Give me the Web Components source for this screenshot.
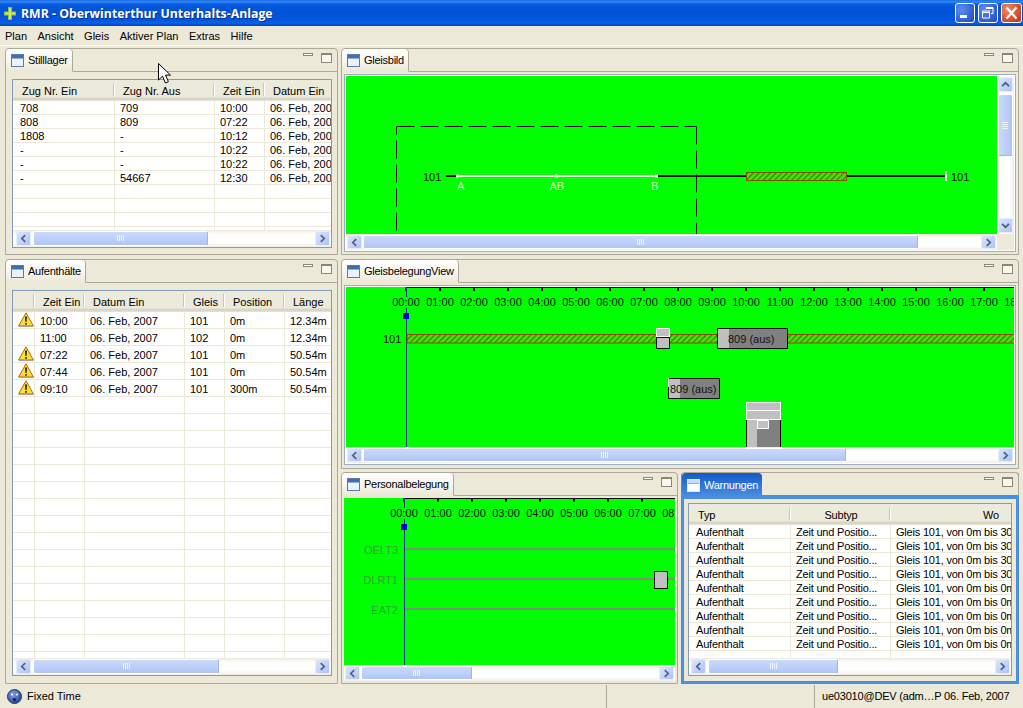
<!DOCTYPE html>
<html lang="de">
<head>
<meta charset="utf-8">
<title>RMR</title>
<style>
  html, body { margin: 0; padding: 0; height: 708px; overflow: hidden; background: #ece9d8; }
  body { font: 11px "Liberation Sans", sans-serif; color: #000; }
  .app { display: flex; flex-direction: column; height: 708px; position: relative; }
  .desk {
    display: grid;
    grid-template-columns: 333px 678px;
    grid-template-rows: 207px 214px 215px;
    column-gap: 3px;
    padding: 2px 0 0 5px;
  }
  .r2 { margin-top: 4px; }
  .r3 { margin-top: 3px; }
  .bottom { display: grid; grid-template-columns: 337px 338px; column-gap: 3px; }
  .cursor { position: absolute; left: 158px; top: 63px; }
</style>
</head>
<body>
<template id="win-icon">
  <svg width="13" height="13" viewBox="0 0 13 13"><rect x=".5" y=".5" width="12" height="12" fill="#eaf3fc" stroke="#5a7ca6"/><rect x="1" y="1" width="11" height="3" fill="#3f6fae"/><rect x="1" y="4" width="11" height="1" fill="#8fb1d8"/></svg>
</template>

<div class="app">
  <title-bar heading="RMR - Oberwinterthur Unterhalts-Anlage"></title-bar>
  <menu-bar items="Plan,Ansicht,Gleis,Aktiver Plan,Extras,Hilfe"></menu-bar>
  <div class="desk">
    <view-pane label="Stilllager" style="--pad:7px 5px 6px 6px">
      <data-table id="still" rows-h="14" thumb="2" thumb-len="175" style="--bar-l:3px"></data-table>
    </view-pane>
    <view-pane label="Gleisbild" style="--pad:2px">
      <framed-canvas thumb="1" thumb-len="555" vertical><track-plan></track-plan></framed-canvas>
    </view-pane>
    <view-pane label="Aufenthälte" style="--pad:7px 5px 7px 6px;grid-row:2/4;margin-top:4px">
      <data-table id="stay" rows-h="17" thumb="2" thumb-len="186" style="--bar-l:3px"></data-table>
    </view-pane>
    <view-pane class="r2" label="GleisbelegungView" style="--pad:2px 2px 3px 2px">
      <framed-canvas thumb="1" thumb-len="483"><occupancy-chart></occupancy-chart></framed-canvas>
    </view-pane>
    <div class="bottom r3">
      <view-pane label="Personalbelegung" style="--pad:2px">
        <framed-canvas bare thumb="1" thumb-len="111" bar-h="16"><staff-chart></staff-chart></framed-canvas>
      </view-pane>
      <view-pane label="Warnungen" active style="--pad:4px 4px 5px 4px">
        <data-table id="warn" rows-h="14" thumb="2" thumb-len="130" style="--bar-l:2px;letter-spacing:-.2px"></data-table>
      </view-pane>
    </div>
  </div>
  <status-bar></status-bar>
  <svg class="cursor" width="13" height="21" viewBox="0 0 13 21"><path d="M.5.5V17l4-3.8L7.4 20l3-1.3-2.9-6.6h5Z" fill="#fff" stroke="#000"/></svg>
</div>

<script>
class TitleBar extends HTMLElement {
  connectedCallback() {
    this.attachShadow({ mode: 'open' });
    this.shadowRoot.innerHTML = `
      <style>
        :host { display: flex; align-items: center; height: 26px; box-sizing: border-box; padding: 0 1px 0 4px;
          background: linear-gradient(#1f6fe8 0, #2f86f5 2px, #0a5be0 4px, #0052d6 10px, #0056dc 20px, #0a60e8 23px, #0044b8 26px); }
        .name { flex: 1; margin-left: 5px; color: #fff; font: bold 12.3px "Open Sans", sans-serif; text-shadow: 1px 1px 0 #0a2f90; white-space: nowrap; }
        .btns { display: flex; gap: 3px; }
        .b { width: 20px; height: 20px; box-sizing: border-box; border: 1px solid #fff; border-radius: 3px; display: block;
          background: radial-gradient(circle at 30% 30%, #5c8cf0, #2a55c8 80%); }
        .b.x { background: radial-gradient(circle at 30% 30%, #ee8a68, #c8401e 80%); width: 21px; }
      </style>
      <svg width="12" height="13" viewBox="0 0 12 13"><path d="M4 0h4v4.5h4v4H8V13H4V8.5H0v-4h4Z" fill="#8fc23a"/><path d="M5 1h2v4.5h4v2H7V12H5V7.5H1v-2h4Z" fill="#cfe860"/></svg>
      <div class="name">${this.getAttribute('heading')}</div>
      <div class="btns">
        <svg class="b" viewBox="0 0 18 18"><rect x="4" y="11" width="7" height="3" fill="#fff"/></svg>
        <svg class="b" viewBox="0 0 18 18"><path d="M7 3.5h7v6h-2M3.5 7h7v7h-7Z M3.5 8.5h7M7 4.5h7" fill="none" stroke="#fff"/></svg>
        <svg class="b x" viewBox="0 0 19 18"><path d="M4.5 3.5l10 11M14.5 3.5l-10 11" stroke="#fff" stroke-width="2.2"/></svg>
      </div>`;
  }
}

class MenuBar extends HTMLElement {
  connectedCallback() {
    this.attachShadow({ mode: 'open' });
    const items = this.getAttribute('items').split(',').map(i => `<span>${i}</span>`).join('');
    this.shadowRoot.innerHTML = `
      <style>
        :host { display: flex; gap: 10.5px; height: 20px; box-sizing: border-box; align-items: center; padding: 0 0 0 5px;
          border-bottom: 1px solid #fff; font-size: 11px; }
      </style>${items}`;
  }
}

class ViewPane extends HTMLElement {
  connectedCallback() {
    this.attachShadow({ mode: 'open' });
    this.shadowRoot.innerHTML = `
      <style>
        :host { display: flex; flex-direction: column; box-sizing: border-box; min-height: 0; min-width: 0;
          border: 1px solid #aca899; border-radius: 4px 4px 0 0; background: #ece9d8; }
        :host([active]) { border-color: #aca899 #4a8fdf #4a8fdf #4a8fdf; }
        .head { flex: none; height: 23px; box-sizing: border-box; display: flex; border-bottom: 1px solid #aca899; }
        :host([active]) .head { border-bottom-color: #4a8fdf; border-right: 1px solid #aca899; margin-right: -1px; }
        .tab { height: 23px; box-sizing: border-box; display: flex; align-items: center; gap: 4px; padding: 0 4px 0 5px; letter-spacing: -.25px;
          background: linear-gradient(#fff, #f6f4ec 60%, #ece9d8); border-right: 1px solid #aca899; border-bottom: 1px solid #ece9d8;
          border-radius: 4px 4px 0 0; }
        :host([active]) .tab { background: linear-gradient(#1259c8, #2a70d4 40%, #4a8fdf); color: #fff; border: 0; height: 24px; }
        .tools { margin-left: auto; display: flex; gap: 8px; padding: 4px 5px 0 0; }
        .min { width: 10px; height: 3px; border: 1px solid #8a8778; box-sizing: border-box; background: #fff; }
        .max { width: 11px; height: 10px; border: 1px solid #8a8778; border-top-width: 2px; box-sizing: border-box; background: #f8f7f0; }
        .body { flex: 1; min-height: 0; display: flex; padding: var(--pad, 2px); }
        :host([active]) .body { border: 2px solid #4a8fdf; border-top-width: 3px; }
        ::slotted(*) { flex: 1; min-width: 0; }
        svg { display: block; }
      </style>
      <div class="head">
        <div class="tab"><span class="ic"></span><span>${this.getAttribute('label')}</span></div>
        <div class="tools"><div class="min"></div><div class="max"></div></div>
      </div>
      <div class="body"><slot></slot></div>`;
    const ic = document.getElementById('win-icon').content.cloneNode(true);
    if (this.hasAttribute('active')) {
      ic.querySelectorAll('rect')[0].setAttribute('stroke', '#dfe9fb');
      ic.querySelectorAll('rect')[0].setAttribute('fill', '#fff');
      ic.querySelectorAll('rect')[1].setAttribute('fill', '#c9dbf6');
    }
    this.shadowRoot.querySelector('.ic').append(ic);
  }
}

class ScrollBar extends HTMLElement {
  connectedCallback() {
    this.attachShadow({ mode: 'open' });
    const vert = this.hasAttribute('vertical');
    const pos = this.getAttribute('thumb') || 1, len = this.getAttribute('thumb-len') || 50;
    const prev = vert ? 'M3.5 9.5L7.5 5.5l4 4' : 'M9.5 3.5L5.5 7.5l4 4';
    const next = vert ? 'M3.5 5.5l4 4 4-4' : 'M5.5 3.5l4 4-4 4';
    const grip = vert
      ? '<path d="M0 .5h6M0 2.5h6M0 4.5h6M0 6.5h6" stroke="#eef3fe"/>'
      : '<path d="M.5 0v6M2.5 0v6M4.5 0v6M6.5 0v6" stroke="#eef3fe"/>';
    this.shadowRoot.innerHTML = `
      <style>
        :host { display: flex; flex: none; box-sizing: border-box; padding: 1px var(--bar-r,1px) 1px var(--bar-l,1px);
          flex-direction: ${vert ? 'column' : 'row'}; ${vert ? 'width:17px' : 'height:var(--bar-h,17px)'};
          background: linear-gradient(${vert ? 'to right, #ece9e0, #fdfdfb 4px, #fff 12px, #f1efe6' : '#ece9e0, #fdfdfb 4px, #fff 12px, #f1efe6'}); }
        .btn { flex: none; ${vert ? 'height:15px' : 'width:15px'}; box-sizing: border-box; border: 1px solid #e6edfc; border-radius: 2px;
          background: linear-gradient(135deg, #dbe5fd, #aec3f4); display: flex; align-items: center; justify-content: center; }
        .next { margin-${vert ? 'top' : 'left'}: auto; }
        .thumb { flex: none; box-sizing: border-box; ${vert ? 'height' : 'width'}: ${len}px; margin-${vert ? 'top' : 'left'}: ${pos}px;
          border: 1px solid #fff; border-${vert ? 'bottom' : 'right'}-color: #9eb6e8; border-radius: 2px;
          background: linear-gradient(${vert ? 'to right, ' : ''}#cbd9fa, #bbcef8 60%, #b0c5f5); display: flex; align-items: center; justify-content: center; }
        svg { display: block; }
      </style>
      <div class="btn"><svg width="15" height="15" viewBox="0 0 15 15"><path d="${prev}" fill="none" stroke="#4d6185" stroke-width="2"/></svg></div>
      <div class="thumb"><svg width="7" height="7" viewBox="0 0 7 7">${grip}</svg></div>
      <div class="btn next"><svg width="15" height="15" viewBox="0 0 15 15"><path d="${next}" fill="none" stroke="#4d6185" stroke-width="2"/></svg></div>`;
  }
}

const WARN_ICON = `<svg width="16" height="15" viewBox="0 0 16 15" style="display:block"><path d="M8 .8L15.4 14H.6Z" fill="#ffdd33" stroke="#b06a10" stroke-linejoin="round"/><path d="M7 4.5h2L8.6 10H7.4Z M7.2 11h1.6v1.7H7.2Z" fill="#222"/><path d="M15.4 14.5H.8" stroke="#a8a090"/></svg>`;

class DataTable extends HTMLElement {
  // columns and rows are set from the page script, render() is called after
  render(columns, rows) {
    this.attachShadow({ mode: 'open' });
    const h = +this.getAttribute('rows-h');
    const total = columns.reduce((s, c) => s + c.w, 0);
    const head = columns.map((c, i) => `<div class="hc ${c.center ? 'center' : ''}" style="width:${c.w}px;padding-left:${i ? 8 : 9}px">${c.title}</div>`).join('');
    let body = '';
    const n = Math.ceil(346 / h);
    for (let r = 0; r < n; r++) {
      const row = rows[r] || [];
      body += `<div class="row">` + columns.map((c, i) => {
        const v = row[i] === undefined ? '' : row[i];
        const inner = v === '!' ? WARN_ICON : v;
        return `<div class="c${v === '!' ? ' ico' : ''}" style="width:${c.w}px;padding-left:${i ? 5 : 7}px">${inner}</div>`;
      }).join('') + `</div>`;
    }
    this.shadowRoot.innerHTML = `
      <style>
        :host { display: flex; flex-direction: column; box-sizing: border-box; border: 1px solid #7f9db9; background: #fff; overflow: hidden; }
        .head { flex: none; height: 21px; display: flex; overflow: hidden; box-sizing: border-box; padding-bottom: 3px;
          background: linear-gradient(#ebeadb, #ebeadb 17px, #dcd9c9 18px, #d2cfbe 19px, #e2e0d3 20px); }
        .hc { flex: none; box-sizing: border-box; line-height: 22px; white-space: nowrap; position: relative; overflow: hidden; }
        .hc::after { content: ""; position: absolute; right: 1px; top: 3px; bottom: 2px; width: 1px; background: #c9c6b5; box-shadow: 1px 0 #fff; }
        .hc.center { text-align: center; padding-left: 0 !important; }
        .body { flex: 1; min-height: 0; overflow: hidden; }
        .row { display: flex; height: ${h}px; box-sizing: border-box; border-bottom: 1px solid #ece9d8; width: ${total}px; }
        .c { flex: none; box-sizing: border-box; border-right: 1px solid #ece9d8; line-height: ${h > 14 ? h + 1 : h}px; white-space: nowrap; overflow: hidden; height: ${h - 1}px; }
        .c.ico { padding-left: 5px !important; overflow: visible; }
      </style>
      <div class="head">${head}</div>
      <div class="body">${body}</div>
      <scroll-bar thumb="${this.getAttribute('thumb')}" thumb-len="${this.getAttribute('thumb-len')}"></scroll-bar>`;
  }
}

class FramedCanvas extends HTMLElement {
  connectedCallback() {
    this.attachShadow({ mode: 'open' });
    const t = this.getAttribute('thumb'), l = this.getAttribute('thumb-len');
    const vert = this.hasAttribute('vertical');
    const bare = this.hasAttribute('bare');
    this.shadowRoot.innerHTML = `
      <style>
        :host { display: grid; box-sizing: border-box; min-height: 0; grid-template-columns: 1fr ${vert ? '17px' : ''}; grid-template-rows: 1fr auto;
          ${bare ? '' : 'border: 1px solid #9fb0c4; padding: 1px; background: #fff;'} }
        .view { background: #00ff00; min-height: 0; min-width: 0; overflow: hidden; }
        .corner { background: #ece9d8; }
        scroll-bar { --bar-h: ${this.getAttribute('bar-h') || 16}px; }
      </style>
      <div class="view"><slot></slot></div>
      ${vert ? '<scroll-bar vertical thumb="2" thumb-len="62"></scroll-bar>' : ''}
      <scroll-bar thumb="${t}" thumb-len="${l}"></scroll-bar>
      ${vert ? '<div class="corner"></div>' : ''}`;
  }
}

// hatch pattern shared by the track drawings
const HATCH = id => `<pattern id="${id}" width="4" height="4" patternUnits="userSpaceOnUse" patternTransform="rotate(45)"><rect width="4" height="4" fill="#3fe800"/><rect width="1.2" height="4" fill="#3c7a10"/></pattern>`;
const SVG_FONT = `font-family="Liberation Sans, sans-serif" font-size="11"`;

class TrackPlan extends HTMLElement {
  connectedCallback() {
    this.attachShadow({ mode: 'open' });
    // coordinates are window pixels minus the origin of the green area
    const ox = 346, oy = 76;
    const X = x => x - ox, Y = y => y - oy;
    this.shadowRoot.innerHTML = `
      <style>:host { display: block; } svg { display: block; }</style>
      <svg width="651" height="159" ${SVG_FONT}>
        <defs>${HATCH('h1')}</defs>
        <path d="M${X(396.5)} ${Y(126.5)}H${X(696.5)}" fill="none" stroke="#111" stroke-dasharray="18 6"/>
        <path d="M${X(396.5)} ${Y(126.5)}V${Y(234)}" fill="none" stroke="#111" stroke-dasharray="8 6 18 6 18 6 18 6 18 6 18 6"/>
        <path d="M${X(696.5)} ${Y(126.5)}V${Y(234)}" fill="none" stroke="#111" stroke-dasharray="18 6"/>
        <path d="M${X(446)} ${Y(176)}H${X(457)}M${X(656)} ${Y(176)}H${X(746)}M${X(847)} ${Y(176)}H${X(946)}" stroke="#111" stroke-width="2"/>
        <path d="M${X(457)} ${Y(176)}H${X(656)}" stroke="#eafbea" stroke-width="2"/>
        <rect x="${X(456)}" y="${Y(174.5)}" width="3" height="3" fill="#fff"/>
        <rect x="${X(555)}" y="${Y(174.5)}" width="3" height="3" fill="#fff"/>
        <rect x="${X(655)}" y="${Y(174.5)}" width="3" height="3" fill="#fff"/>
        <rect x="${X(746.5)}" y="${Y(172.5)}" width="100" height="8" fill="url(#h1)" stroke="#8a4a00"/>
        <rect x="${X(945)}" y="${Y(171)}" width="2" height="10" fill="#eafbea"/>
        <text x="${X(423)}" y="${Y(181)}" fill="#111">101</text>
        <text x="${X(951)}" y="${Y(181)}" fill="#111">101</text>
        <g fill="#d8fbd8">
          <text x="${X(457)}" y="${Y(190)}">A</text>
          <text x="${X(549.5)}" y="${Y(190)}">AB</text>
          <text x="${X(651)}" y="${Y(190)}">B</text>
        </g>
      </svg>`;
  }
}

// axis with the hour labels, used by both time charts
function timeAxis(x0, hours, yLabel) {
  let s = '';
  for (let h = 0; h < hours; h++) {
    const x = x0 + h * 34;
    s += `<rect x="${x - 1}" y="1" width="2" height="3" fill="#111"/>`;
    s += `<text x="${x}" y="${yLabel}" text-anchor="middle" fill="#111">${String(h).padStart(2, '0')}:00</text>`;
  }
  return s + `<rect x="${x0 - .5}" y="0" width="1200" height="1" fill="#111"/>`;
}

class OccupancyChart extends HTMLElement {
  connectedCallback() {
    this.attachShadow({ mode: 'open' });
    const ox = 346, oy = 287;
    const X = x => x - ox, Y = y => y - oy;
    const box = (x, y, w, h, split, label) => `
      <rect x="${X(x) + .5}" y="${Y(y) + .5}" width="${w - 1}" height="${h - 1}" fill="#808080" stroke="#111"/>
      <rect x="${X(x) + 1}" y="${Y(y) + 1}" width="${split}" height="${h - 2}" fill="#c0c0c0"/>
      ${label ? `<text x="${X(x) + label}" y="${Y(y) + 15}" fill="#111">809 (aus)</text>` : ''}`;
    this.shadowRoot.innerHTML = `
      <style>:host { display: block; } svg { display: block; }</style>
      <svg width="668" height="161" ${SVG_FONT}>
        <defs>${HATCH('h2')}</defs>
        ${timeAxis(X(406), 19, 19)}
        <path d="M${X(406.5)} 0V${Y(297)}M${X(406.5)} ${Y(308)}V161" stroke="#123a8c"/>
        <rect x="${X(403)}" y="${Y(313)}" width="6" height="6" fill="#0000d0"/>
        <text x="${X(383)}" y="${Y(343)}" fill="#111">101</text>
        <rect x="${X(407)}" y="${Y(334.5)}" width="700" height="8.5" fill="url(#h2)" stroke="#8a4a00"/>
        <rect x="${X(656.5)}" y="${Y(337.5)}" width="13" height="11" fill="#c0c0c0" stroke="#111"/>
        <rect x="${X(656.5)}" y="${Y(328.5)}" width="13" height="8" fill="#c0c0c0" stroke="#fff"/>
        ${box(717, 328, 71, 21, 11, 11)}
        ${box(668, 378, 52, 21, 11, 2)}
        <path d="M${X(668.5)} ${Y(378)}v9" stroke="#fff"/>
        ${box(746, 418, 35, 40, 10)}
        <rect x="${X(746.5)}" y="${Y(402.5)}" width="34" height="8" fill="#c0c0c0" stroke="#fff"/>
        <rect x="${X(746.5)}" y="${Y(410.5)}" width="34" height="9" fill="#c0c0c0" stroke="#fff"/>
        <rect x="${X(757.5)}" y="${Y(420.5)}" width="11" height="8" fill="#c0c0c0" stroke="#fff"/>
      </svg>`;
  }
}

class StaffChart extends HTMLElement {
  connectedCallback() {
    this.attachShadow({ mode: 'open' });
    const ox = 344, oy = 498;
    const X = x => x - ox, Y = y => y - oy;
    const lane = (y, name) => `
      <rect x="${X(405)}" y="${Y(y) - 1}" width="300" height="2" fill="#7f8f7f"/>
      <text x="${X(398)}" y="${Y(y) + 5}" text-anchor="end" fill="#30a830">${name}</text>`;
    this.shadowRoot.innerHTML = `
      <style>:host { display: block; } svg { display: block; }</style>
      <svg width="331" height="167" ${SVG_FONT}>
        ${timeAxis(X(404), 10, 19)}
        <path d="M${X(404.5)} 0V${Y(508)}M${X(404.5)} ${Y(519)}V167" stroke="#123a8c"/>
        <rect x="${X(401)}" y="${Y(524)}" width="6" height="6" fill="#0000d0"/>
        ${lane(549, 'OELT3')}${lane(579, 'DLRT1')}${lane(609, 'EAT2')}
        <rect x="${X(654.5)}" y="${Y(571.5)}" width="13" height="17" fill="#c0c0c0" stroke="#111"/>
      </svg>`;
  }
}

class StatusBar extends HTMLElement {
  connectedCallback() {
    this.attachShadow({ mode: 'open' });
    this.shadowRoot.innerHTML = `
      <style>
        :host { display: grid; grid-template-columns: 606px 208px 1fr; height: 23px; margin-top: 1px; line-height: 23px; font-size: 11px; }
        .f { display: flex; align-items: center; gap: 5px; padding-left: 7px; box-sizing: border-box; white-space: nowrap; }
        .f + .f { border-left: 1px solid #aca899; }
        .user { padding-left: 7px; letter-spacing: -.2px; }
        svg { display: block; }
      </style>
      <div class="f">
        <svg width="15" height="15" viewBox="0 0 15 15">
          <defs><radialGradient id="ball" cx=".4" cy=".35" r=".7"><stop offset="0" stop-color="#7fa4ea"/><stop offset="1" stop-color="#1f3f90"/></radialGradient></defs>
          <circle cx="7.5" cy="7.5" r="7" fill="url(#ball)" stroke="#223a70"/>
          <circle cx="5" cy="5.5" r="1.1" fill="#fff"/><circle cx="10" cy="5.5" r="1.1" fill="#fff"/>
          <circle cx="7.5" cy="10.5" r="1.6" fill="#101c40"/>
        </svg>
        <span>Fixed Time</span>
      </div>
      <div class="f"></div>
      <div class="f user">ue03010@DEV (adm…P 06. Feb, 2007</div>`;
  }
}

customElements.define('title-bar', TitleBar);
customElements.define('menu-bar', MenuBar);
customElements.define('view-pane', ViewPane);
customElements.define('scroll-bar', ScrollBar);
customElements.define('data-table', DataTable);
customElements.define('framed-canvas', FramedCanvas);
customElements.define('track-plan', TrackPlan);
customElements.define('occupancy-chart', OccupancyChart);
customElements.define('staff-chart', StaffChart);
customElements.define('status-bar', StatusBar);

const D = '06. Feb, 2007';
document.getElementById('still').render(
  [{ title: 'Zug Nr. Ein', w: 102 }, { title: 'Zug Nr. Aus', w: 100 }, { title: 'Zeit Ein', w: 50 }, { title: 'Datum Ein', w: 100 }],
  [['708', '709', '10:00', D], ['808', '809', '07:22', D], ['1808', '-', '10:12', D], ['-', '-', '10:22', D], ['-', '-', '10:22', D], ['-', '54667', '12:30', D]]
);
document.getElementById('stay').render(
  [{ title: '', w: 22 }, { title: 'Zeit Ein', w: 50 }, { title: 'Datum Ein', w: 100 }, { title: 'Gleis', w: 40 }, { title: 'Position', w: 60 }, { title: 'Länge', w: 60 }],
  [['!', '10:00', D, '101', '0m', '12.34m'], ['', '11:00', D, '102', '0m', '12.34m'], ['!', '07:22', D, '101', '0m', '50.54m'], ['!', '07:44', D, '101', '0m', '50.54m'], ['!', '09:10', D, '101', '300m', '50.54m']]
);
const warnRow = to => ['Aufenthalt', 'Zeit und Positio...', 'Gleis 101, von 0m bis ' + to];
document.getElementById('warn').render(
  [{ title: 'Typ', w: 102 }, { title: 'Subtyp', w: 100, center: true }, { title: 'Wo', w: 200, center: true }],
  ['300m', '300m', '300m', '300m', '0m', '0m', '0m', '0m', '0m'].map(warnRow)
);
</script>
</body>
</html>
